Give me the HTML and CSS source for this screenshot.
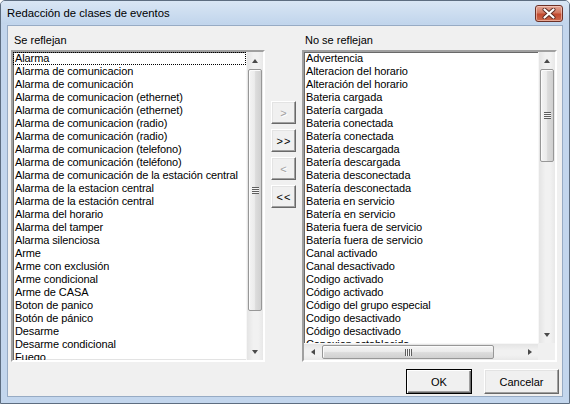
FILE: index.html
```html
<!DOCTYPE html>
<html lang="es">
<head>
<meta charset="utf-8">
<title>Redacción de clases de eventos</title>
<link rel="stylesheet" href="styles.css">
</head>
<body>
<div class="window">
  <div class="titlebar">
    <span class="title">Redacción de clases de eventos</span>
    <div class="close">
      <svg width="14" height="11" viewBox="0 0 14 11">
        <path d="M2.5 1.5 L11.5 9.5 M11.5 1.5 L2.5 9.5" stroke="#5a2a22" stroke-width="4" stroke-linecap="round"/>
        <path d="M2.5 1.5 L11.5 9.5 M11.5 1.5 L2.5 9.5" stroke="#ffffff" stroke-width="2.2" stroke-linecap="round"/>
      </svg>
    </div>
  </div>
  <div class="client">
    <div class="panes">
      <div class="pane pane-left">
        <div class="label">Se reflejan</div>
        <div class="listbox">
          <div class="items">
            <div class="item focus">Alarma</div>
            <div class="item">Alarma de comunicacion</div>
            <div class="item">Alarma de comunicación</div>
            <div class="item">Alarma de comunicacion (ethernet)</div>
            <div class="item">Alarma de comunicación (ethernet)</div>
            <div class="item">Alarma de comunicacion (radio)</div>
            <div class="item">Alarma de comunicación (radio)</div>
            <div class="item">Alarma de comunicacion (telefono)</div>
            <div class="item">Alarma de comunicación (teléfono)</div>
            <div class="item">Alarma de comunicación de la estación central</div>
            <div class="item">Alarma de la estacion central</div>
            <div class="item">Alarma de la estación central</div>
            <div class="item">Alarma del horario</div>
            <div class="item">Alarma del tamper</div>
            <div class="item">Alarma silenciosa</div>
            <div class="item">Arme</div>
            <div class="item">Arme con exclusión</div>
            <div class="item">Arme condicional</div>
            <div class="item">Arme de CASA</div>
            <div class="item">Boton de panico</div>
            <div class="item">Botón de pánico</div>
            <div class="item">Desarme</div>
            <div class="item">Desarme condicional</div>
            <div class="item">Fuego</div>
          </div>
          <div class="vscroll">
            <div class="sbtn"><span class="arrow up"></span></div>
            <div class="track">
              <div class="vthumb thumb-left"><span class="grip-h"></span></div>
            </div>
            <div class="sbtn"><span class="arrow down"></span></div>
          </div>
        </div>
      </div>

      <div class="movers">
        <button class="btn mover" disabled>&gt;</button>
        <button class="btn mover">&gt;&gt;</button>
        <button class="btn mover" disabled>&lt;</button>
        <button class="btn mover">&lt;&lt;</button>
      </div>

      <div class="pane pane-right">
        <div class="label">No se reflejan</div>
        <div class="listbox listbox-h">
          <div class="items">
            <div class="item">Advertencia</div>
            <div class="item">Alteracion del horario</div>
            <div class="item">Alteración del horario</div>
            <div class="item">Bateria cargada</div>
            <div class="item">Batería cargada</div>
            <div class="item">Bateria conectada</div>
            <div class="item">Batería conectada</div>
            <div class="item">Bateria descargada</div>
            <div class="item">Batería descargada</div>
            <div class="item">Bateria desconectada</div>
            <div class="item">Batería desconectada</div>
            <div class="item">Bateria en servicio</div>
            <div class="item">Batería en servicio</div>
            <div class="item">Bateria fuera de servicio</div>
            <div class="item">Batería fuera de servicio</div>
            <div class="item">Canal activado</div>
            <div class="item">Canal desactivado</div>
            <div class="item">Codigo activado</div>
            <div class="item">Código activado</div>
            <div class="item">Código del grupo especial</div>
            <div class="item">Codigo desactivado</div>
            <div class="item">Código desactivado</div>
            <div class="item">Conexion establecida</div>
          </div>
          <div class="vscroll">
            <div class="sbtn"><span class="arrow up"></span></div>
            <div class="track">
              <div class="vthumb thumb-right"><span class="grip-h"></span></div>
            </div>
            <div class="sbtn"><span class="arrow down"></span></div>
          </div>
          <div class="hscroll">
            <div class="sbtn"><span class="arrow left"></span></div>
            <div class="htrack">
              <div class="hthumb"><span class="grip-v"></span></div>
            </div>
            <div class="sbtn"><span class="arrow right"></span></div>
          </div>
          <div class="corner"></div>
        </div>
      </div>
    </div>

    <div class="actions">
      <button class="btn btn-default btn-ok">OK</button>
      <button class="btn btn-cancel">Cancelar</button>
    </div>
  </div>
</div>
</body>
</html>
```

FILE: styles.css
```css
* { box-sizing: border-box; }

html, body {
  margin: 0;
  padding: 0;
  background: #ffffff;
}

body {
  width: 570px;
  height: 404px;
  font-family: "Liberation Sans", Arial, sans-serif;
  font-size: 11px;
  color: #000;
}

.window {
  width: 570px;
  height: 404px;
  border: 1px solid #5d6d80;
  border-radius: 5px 5px 0 0;
  background: #c3d6ed;
  display: flex;
  flex-direction: column;
}

.titlebar {
  height: 23px;
  flex: none;
  display: flex;
  align-items: center;
  justify-content: space-between;
  padding: 0 6px 0 6px;
  background: linear-gradient(#d9e6f4, #c1d5ec);
  border-radius: 4px 4px 0 0;
}

.title {
  font-size: 11.3px;
  color: #000;
  padding-top: 1px;
}

.close {
  width: 28px;
  height: 17px;
  margin-top: 1px;
  border: 1px solid #6c3026;
  border-radius: 3px;
  background: linear-gradient(#e3a595 0%, #d2775f 45%, #c24a30 55%, #cc6a4e 100%);
  box-shadow: inset 0 0 0 1px rgba(255, 220, 210, 0.55);
  display: flex;
  align-items: center;
  justify-content: center;
}

.client {
  flex: 1;
  margin: 1px 6px 6px 6px;
  border: 1px solid #97abc4;
  background: #f0f0f0;
  padding: 8px 4px 0 3px;
  display: flex;
  flex-direction: column;
}

.panes {
  display: flex;
  align-items: flex-start;
}

.pane-left { width: 254px; }
.pane-right { width: 255px; }

.label {
  height: 13px;
  line-height: 13px;
  margin-bottom: 3px;
  padding-left: 3px;
}

.listbox {
  height: 312px;
  border: 2px solid;
  border-color: #a0a0a0 #ffffff #ffffff #a0a0a0;
  box-shadow: inset 1px 1px 0 #696969, inset -1px -1px 0 #e3e3e3;
  background: #fff;
  display: grid;
  grid-template-columns: 1fr 17px;
  grid-template-rows: 1fr;
  overflow: hidden;
}

.listbox-h {
  grid-template-rows: 1fr 17px;
}

.items {
  overflow: hidden;
  padding-left: 1px;
  margin-left: 0;
}

.item {
  height: 13px;
  line-height: 13px;
  padding-left: 1px;
  white-space: nowrap;
  letter-spacing: -0.1px;
}

.item.focus {
  outline: 1px dotted #000;
  outline-offset: -1px;
  margin-left: -1px;
  padding-left: 2px;
}

/* scrollbars */
.vscroll {
  display: flex;
  flex-direction: column;
  background: linear-gradient(to right, #e4e4e4, #f1f1f1 40%, #f1f1f1 70%, #e8e8e8);
  border-left: 1px solid #f7f7f7;
}

.hscroll {
  display: flex;
  background: linear-gradient(#e4e4e4, #f1f1f1 40%, #f1f1f1 70%, #e8e8e8);
  border-top: 1px solid #f7f7f7;
}

.corner { background: #f0f0f0; }

.sbtn {
  flex: none;
  width: 16px;
  height: 16px;
  display: flex;
  align-items: center;
  justify-content: center;
}

.vscroll .sbtn { width: 100%; height: 17px; }
.hscroll .sbtn { height: 100%; width: 17px; }

.arrow {
  width: 0;
  height: 0;
  border-style: solid;
}
.arrow.up { border-width: 0 3.5px 4px 3.5px; border-color: transparent transparent #4a4a4a transparent; }
.arrow.down { border-width: 4px 3.5px 0 3.5px; border-color: #4a4a4a transparent transparent transparent; }
.arrow.left { border-width: 3.5px 4px 3.5px 0; border-color: transparent #4a4a4a transparent transparent; }
.arrow.right { border-width: 3.5px 0 3.5px 4px; border-color: transparent transparent transparent #4a4a4a; }

.track {
  flex: 1;
  padding: 0 1px;
}

.htrack {
  flex: 1;
  padding: 1px 0;
}

.vthumb {
  border: 1px solid #979797;
  border-radius: 2px;
  background: linear-gradient(to right, #f4f4f4, #ececec 45%, #dcdcdc 55%, #d0d0d0);
  box-shadow: inset 1px 1px 0 #fbfbfb;
  display: flex;
  align-items: center;
  justify-content: center;
}

.thumb-left { height: 242px; }
.thumb-right { height: 93px; }

.hthumb {
  margin-left: 1px;
  width: 172px;
  height: 100%;
  border: 1px solid #979797;
  border-radius: 2px;
  background: linear-gradient(#f4f4f4, #ececec 45%, #dcdcdc 55%, #d0d0d0);
  box-shadow: inset 1px 1px 0 #fbfbfb;
  display: flex;
  align-items: center;
  justify-content: center;
}

.grip-h {
  width: 7px;
  height: 7px;
  background: repeating-linear-gradient(#5e5e5e 0 1px, #f4f4f4 1px 2px);
}

.grip-v {
  width: 7px;
  height: 7px;
  background: repeating-linear-gradient(to right, #5e5e5e 0 1px, #f4f4f4 1px 2px);
}

/* middle buttons */
.movers {
  width: 37px;
  padding: 67px 0 0 6px;
  display: flex;
  flex-direction: column;
  gap: 5px;
}

.btn {
  font-family: "Liberation Sans", Arial, sans-serif;
  font-size: 11px;
  color: #000;
  background: #f0f0f0;
  border: 1px solid;
  border-color: #ffffff #696969 #696969 #ffffff;
  box-shadow: inset -1px -1px 0 #a0a0a0, inset 1px 1px 0 #e3e3e3;
  padding: 0;
  margin: 0;
}

.mover {
  width: 25px;
  height: 23px;
  letter-spacing: 1px;
  padding-left: 1px;
}

.mover:disabled {
  color: #a0a0a0;
  text-shadow: 1px 1px 0 #ffffff;
}

/* dialog buttons */
.actions {
  margin-top: 7px;
  display: flex;
  justify-content: flex-end;
  gap: 12px;
  margin-right: -1px;
}

.btn-ok { width: 66px; height: 25px; }
.btn-cancel { width: 75px; height: 25px; }

.btn-default {
  border: 1px solid #000;
  box-shadow: inset 1px 1px 0 #ffffff, inset -1px -1px 0 #696969, inset -2px -2px 0 #a0a0a0;
}
```
